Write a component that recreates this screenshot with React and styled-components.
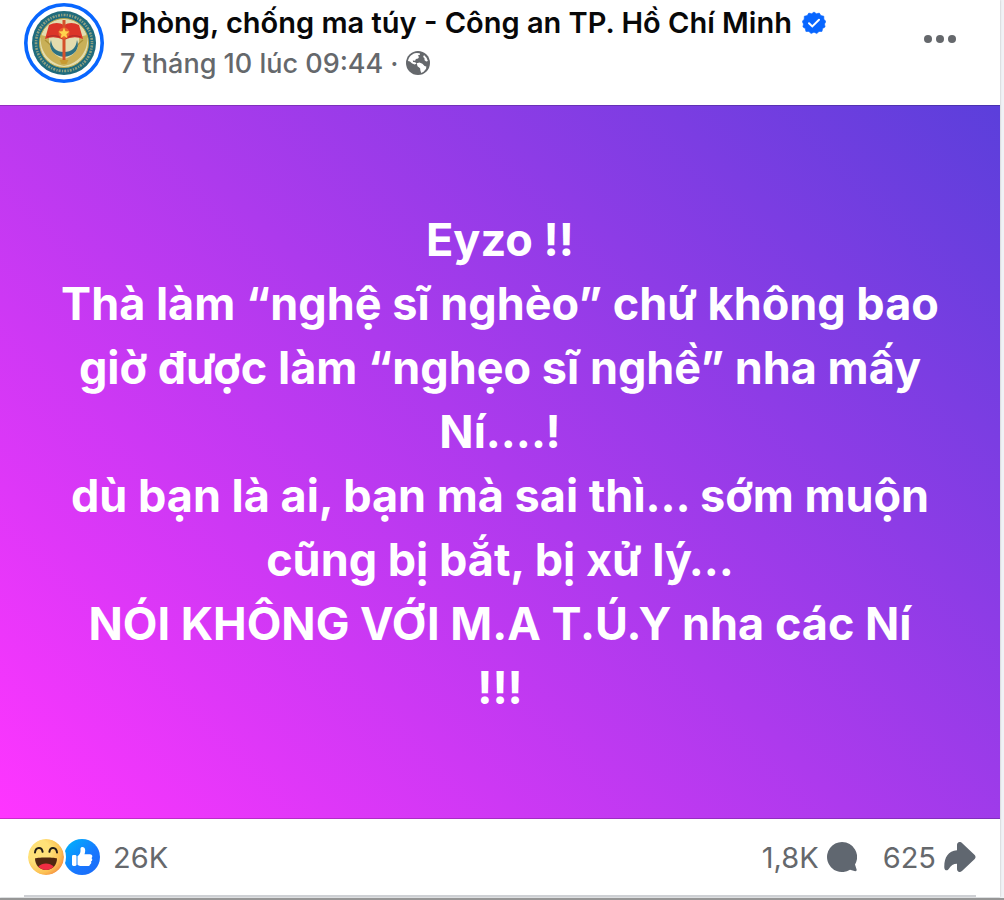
import React from 'react';
import styled, { createGlobalStyle } from 'styled-components';

const GlobalStyle = createGlobalStyle`
  * {
    box-sizing: border-box;
  }
  body {
    margin: 0;
    background: #f0f2f5;
    font-family: Inter, "Liberation Sans", sans-serif;
  }
`;

const lines = [
  'Eyzo !!',
  'Thà làm “nghệ sĩ nghèo” chứ không bao',
  'giờ được làm “nghẹo sĩ nghề” nha mấy',
  'Ní….!',
  'dù bạn là ai, bạn mà sai thì… sớm muộn',
  'cũng bị bắt, bị xử lý…',
  'NÓI KHÔNG VỚI M.A T.Ú.Y nha các Ní',
  '!!!',
];

const Avatar = () => (
  <svg width="80" height="80" viewBox="0 0 80 80" aria-hidden="true">
    <circle cx="40" cy="40" r="38.2" fill="#fff" stroke="#0866ff" strokeWidth="3.6" />
    <circle cx="40" cy="40" r="32" fill="#1f6b7c" />
    <circle cx="40" cy="40" r="28" fill="none" stroke="#8fa183" strokeWidth="2.6" strokeDasharray="1.2 1.3 2 1.1" />
    <circle cx="40" cy="40" r="24.5" fill="#e3dcae" stroke="#b9a64a" />
    <path d="M17 32c-2 15 7 28 23 31 16-3 25-16 23-31l-8 2c1 11-4 19-15 22-11-3-16-11-15-22z" fill="#c9b058" />
    <path d="M21 37c3 2 5 4 7 8 2 4 5 6 9 7M59 37c-3 2-5 4-7 8-2 4-5 6-9 7" fill="none" stroke="#ac9238" strokeWidth="1.500" />
    <path d="M27 37c-3 8 2 16 13 17 11-1 16-9 13-17-1 8-5 12-13 12s-12-4-13-12z" fill="#2c7183" />
    <path d="M25 22q8-4 15 0 7-4 15 0l4 14q-9-4-19 1-10-5-19-1z" fill="#dc3528" />
    <path d="M23 34q8-3 15 1M42 35q7-4 15-1" fill="none" stroke="#a82b28" />
    <path d="M38.500 17h3v40h-3z" fill="#d4512b" />
    <path d="M35.500 57h9l-2 4h-5z" fill="#c79a32" />
    <circle cx="40" cy="30" r="5.500" fill="#e8632f" />
    <path d="m40 24.500 1.500 3.800 4 .3-3.100 2.600 1 4-3.400-2.200-3.400 2.200 1-4-3.100-2.600 4-.3z" fill="#ffd34d" />
  </svg>
);

const Verified = () => (
  <svg width="24" height="24" viewBox="0 0 24 24" role="img" aria-label="Verified">
    <path
      d="m12 1 2.400 1.700 2.900-.6 1.600 2.500 2.900.6.100 3 2 2.200L22.500 13l.6 2.900-2.500 1.600-.6 2.900-3 .1-2.200 2L12 21.200l-2.900 1.300-2.200-2-3-.1-.6-2.900L.900 15.900l.6-2.900L.200 10.400l2-2.200.1-3 2.900-.6 1.600-2.500 2.900.6z"
      fill="#0866ff"
      stroke="#0866ff"
      strokeLinejoin="round"
      strokeWidth=".6"
    />
    <path d="m7 12.200 3.300 3.200L17 8.800" fill="none" stroke="#fff" strokeWidth="2" strokeLinecap="round" />
  </svg>
);

const Globe = () => (
  <svg width="24" height="24" viewBox="0 0 24 24" role="img" aria-label="Public">
    <circle cx="12" cy="12" r="12" fill="#65686c" />
    <path
      d="M2 10C2.600 5.800 6.200 2.500 10.500 2l3.200.2.300 1.500-2.200.9 1.200 1.500-.9 1.500-2.200.4-.8 1.700-2.300-.2.300 1.500 2.200.2 1.200 1.500-2 .8-2.700-1.200-1.800-1.700z"
      fill="#fff"
    />
    <path
      d="m10.800 12.200 2.600-.8 3 1.300 2.200 2.300 1.700.6-.2 2.200-2.500 3-2.400 1.200-.8-2.600-.3-2.200-2.600-2z"
      fill="#fff"
    />
    <path d="m18 4 2.500 2.800 1.400 3.300-1.700.4-1.600-1.300-.2-2.100-1.300-1.200z" fill="#fff" />
  </svg>
);

const Dots = () => (
  <svg width="32" height="8" viewBox="0 0 32 8" aria-hidden="true">
    <circle cx="4" cy="4" r="4" fill="#65686c" />
    <circle cx="16" cy="4" r="4" fill="#65686c" />
    <circle cx="28" cy="4" r="4" fill="#65686c" />
  </svg>
);

const Haha = () => (
  <svg width="36" height="36" viewBox="0 0 36 36" role="img" aria-label="Haha">
    <defs>
      <radialGradient id="face" cx=".3" cy=".35" r=".8">
        <stop offset=".4" stopColor="#ffe178" />
        <stop offset=".75" stopColor="#fcc154" />
        <stop offset="1" stopColor="#f4823c" />
      </radialGradient>
    </defs>
    <circle cx="18" cy="18" r="18" fill="url(#face)" />
    <path d="M7 13.500c.6-6 7-6 7.600-.7M21.400 12.800c.6-5.300 7-5.300 7.600.7" fill="none" stroke="#241c18" strokeWidth="2" strokeLinecap="round" />
    <path d="M7 19.500c0-1.500 22-1.500 22 0C29 26 24.500 31 18 31S7 26 7 19.500z" fill="#512810" />
    <path d="M10.300 27.500c4-4 11.400-4 15.400 0C23.800 29.800 21 31 18 31s-5.800-1.200-7.700-3.500z" fill="#f02d42" />
  </svg>
);

const Like = () => (
  <svg width="36" height="36" viewBox="0 0 36 36" role="img" aria-label="Like">
    <defs>
      <linearGradient id="thumb" x1="0" y1="0" x2="1" y2="1">
        <stop offset=".1" stopColor="#02adfc" />
        <stop offset=".6" stopColor="#1877ff" />
        <stop offset="1" stopColor="#1c69f5" />
      </linearGradient>
    </defs>
    <circle cx="18" cy="18" r="18" fill="url(#thumb)" />
    <rect x="8" y="16" width="4.500" height="11" rx="1.400" fill="#fff" />
    <path
      d="M13.500 17.200c2.200-1.700 3-3.300 3-5.200V9.600c0-2.300 4.700-2.500 4.700 1.600 0 1.600-.3 2.800-.7 4H26c2.600 0 3 2.900 1.400 3.900 1.500 1.200.9 3-.4 3.500.7 1.300.1 2.400-1 2.800-.2 1.200-.9 1.700-2.200 1.700h-6.300c-2 0-4-.6-4-1.500z"
      fill="#fff"
    />
  </svg>
);

const Comment = () => (
  <svg width="30" height="30" viewBox="0 0 30 30" aria-hidden="true">
    <path
      d="M15 0a15 15 0 0 1 13 22.500l1.600 5c.3 1-.3 1.800-1.300 1.700l-5.300-1.500A15 15 0 1 1 15 0z"
      fill="#606770"
    />
  </svg>
);

const Share = () => (
  <svg width="32" height="30" viewBox="0 0 32 30" aria-hidden="true">
    <path
      d="M13 8.200V3c0-2.800 3-4 5-2.100l12.700 12.200c1.100 1.100 1.100 2.700 0 3.800L18 29.100c-2 1.900-5 .7-5-2.100v-5.200c-3.500 0-6.200 1.700-8.300 5.200-1.400 2.300-4.300 1.400-4.400-1.600C0 16 4 8.900 13 8.200z"
      fill="#606770"
    />
  </svg>
);

const App = () => (
  <>
    <GlobalStyle />
    <Page>
      <Post>
        <Header>
          <Avatar />
          <Info>
            <NameRow>
              <Name href="#">Phòng, chống ma túy - Công an TP. Hồ Chí Minh</Name>
              <Verified />
            </NameRow>
            <DateRow>
              <DateLink href="#">7 tháng 10 lúc 09:44</DateLink>
              <span>·</span>
              <Globe />
            </DateRow>
          </Info>
          <IconButton aria-label="More"><Dots /></IconButton>
        </Header>
        <Message>
          {lines.map((line) => <Line key={line}>{line}</Line>)}
        </Message>
        <Footer>
          <Reactions>
            <Faces><Haha /><Like /></Faces>
            26K
          </Reactions>
          <Counts>
            <CountButton>1,8K<Comment /></CountButton>
            <CountButton>625<Share /></CountButton>
          </Counts>
        </Footer>
      </Post>
      <Edge />
    </Page>
  </>
);

const Page = styled.div`
  overflow: hidden;
`;
const Post = styled.article`
  margin-right: 4px;
  background: #fff;
  box-shadow: 0 0 2px rgba(0, 0, 0, 0.25);
`;
const Header = styled.header`
  display: flex;
  align-items: flex-start;
  gap: 16px;
  height: 105px;
  padding: 3px 44px 0 24px;
`;
const Info = styled.div`
  flex: 1;
  min-width: 0;
`;
const NameRow = styled.div`
  display: flex;
  align-items: center;
  gap: 10px;
  height: 40px;
  white-space: nowrap;
`;
const Name = styled.a`
  color: #080809;
  font-size: 29px;
  font-weight: 600;
  line-height: 40px;
  text-decoration: none;
`;
const DateRow = styled.div`
  display: flex;
  align-items: center;
  gap: 7px;
  height: 40px;
  color: #65686c;
  font-size: 27px;
  font-weight: 500;
`;
const DateLink = styled.a`
  color: inherit;
  text-decoration: none;
`;
const IconButton = styled.button`
  display: flex;
  align-items: center;
  height: 72px;
  padding: 0;
  border: 0;
  background: none;
`;
const Message = styled.div`
  display: flex;
  flex-direction: column;
  justify-content: center;
  min-height: 714px;
  padding: 4px 32px 0;
  border: solid rgba(0, 0, 0, 0.2);
  border-width: 1px 0;
  background: linear-gradient(45deg, #ff35ff, #5b3fdb) border-box;
`;
const Line = styled.p`
  margin: 0;
  color: #fff;
  font-size: 45px;
  font-weight: 700;
  line-height: 64px;
  text-align: center;
`;
const Footer = styled.footer`
  display: flex;
  align-items: center;
  justify-content: space-between;
  height: 78px;
  margin: 0 24px;
  border-bottom: 2px solid #ced0d4;
  color: #65686c;
  font-size: 29px;
`;
const Reactions = styled.div`
  display: flex;
  align-items: center;
  gap: 13px;
  padding-left: 4px;
`;
const Faces = styled.div`
  display: flex;

  svg:first-child {
    z-index: 1;
    border-radius: 50%;
    box-shadow: 0 0 0 2px #fff;
  }
`;
const Counts = styled.div`
  display: flex;
  gap: 26px;
`;
const CountButton = styled.button`
  display: flex;
  align-items: center;
  gap: 8px;
  padding: 0;
  border: 0;
  background: none;
  color: inherit;
  font: inherit;
`;
const Edge = styled.div`
  height: 3px;
  margin-top: 1px;
  background: #969696;
`;

export default App;
